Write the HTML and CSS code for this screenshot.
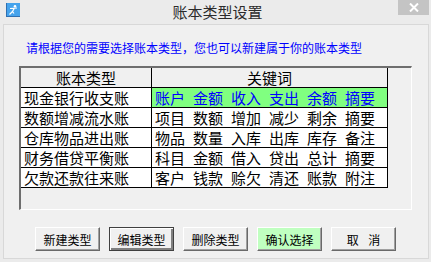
FILE: index.html
```html
<!DOCTYPE html>
<html lang="zh">
<head>
    <meta charset="UTF-8">
    <title>账本类型设置</title>
    <link rel="stylesheet" href="styles.css">
</head>
<body>

<div class="window">
    <!-- 标题栏 -->
    <div class="titlebar">
        <svg class="app-icon" width="14" height="14" viewBox="0 0 14 14">
            <rect x="0" y="0" width="14" height="14" fill="#2f6fb0"/>
            <rect x="1" y="0" width="13" height="13" fill="#45a3ec"/>
            <circle cx="9" cy="3.2" r="1.3" fill="#fff"/>
            <path d="M4 5.5 L11 5 M8.5 5 L6.5 8.5 L8 10.5 M6.5 8.5 L3.5 11.5" stroke="#fff" stroke-width="1.2" fill="none"/>
        </svg>
        <div class="title">账本类型设置</div>
        <div class="close">
            <svg width="10" height="9" viewBox="0 0 10 9">
                <path d="M1 0.5 L9 8.5 M9 0.5 L1 8.5" stroke="#fff" stroke-width="2"/>
            </svg>
        </div>
    </div>

    <div class="client">
        <div class="tip">请根据您的需要选择账本类型，您也可以新建属于你的账本类型</div>

        <div class="panel">
            <div class="grid">
                <div class="row head">
                    <div class="c1 center">账本类型</div>
                    <div class="c2 center">关键词</div>
                </div>
                <div class="row selected">
                    <div class="c1">现金银行收支账</div>
                    <div class="c2"><span>账户</span><span>金额</span><span>收入</span><span>支出</span><span>余额</span><span>摘要</span></div>
                </div>
                <div class="row">
                    <div class="c1">数额增减流水账</div>
                    <div class="c2"><span>项目</span><span>数额</span><span>增加</span><span>减少</span><span>剩余</span><span>摘要</span></div>
                </div>
                <div class="row">
                    <div class="c1">仓库物品进出账</div>
                    <div class="c2"><span>物品</span><span>数量</span><span>入库</span><span>出库</span><span>库存</span><span>备注</span></div>
                </div>
                <div class="row">
                    <div class="c1">财务借贷平衡账</div>
                    <div class="c2"><span>科目</span><span>金额</span><span>借入</span><span>贷出</span><span>总计</span><span>摘要</span></div>
                </div>
                <div class="row">
                    <div class="c1">欠款还款往来账</div>
                    <div class="c2"><span>客户</span><span>钱款</span><span>赊欠</span><span>清还</span><span>账款</span><span>附注</span></div>
                </div>
            </div>
        </div>

        <div class="buttons">
            <button>新建类型</button>
            <button class="default">编辑类型</button>
            <button>删除类型</button>
            <button class="ok">确认选择</button>
            <button class="wide">取 消</button>
        </div>
    </div>
</div>

</body>
</html>
```

FILE: styles.css
```css
body {
    margin: 0;
    padding: 0;
    background-color: #ebebeb;
    font-family: "Noto Sans CJK SC", "DejaVu Sans", sans-serif;
}
.window {
    width: 431px;
    height: 262px;
    overflow: hidden;
}
.titlebar {
    position: relative;
    height: 24px;
    display: flex;
    align-items: center;
}
.app-icon {
    position: absolute;
    left: 6px;
    top: 3px;
}
.title {
    flex: 1;
    text-align: center;
    font-size: 15px;
    line-height: 24px;
    color: #2b2b2b;
    padding-left: 4px;
}
.close {
    position: absolute;
    right: 2px;
    top: 0;
    width: 31px;
    height: 15px;
    background-color: #c4c4c4;
    display: flex;
    align-items: center;
    justify-content: center;
}
.client {
    margin-left: 3px;
    width: 424px;
    height: 233px;
    border: 1px solid #d8d8d8;
    background-color: #f0f0f0;
    display: flex;
    flex-direction: column;
}
.tip {
    margin: 15px 0 0 22px;
    font-size: 12px;
    line-height: 16px;
    color: #0000ff;
    white-space: nowrap;
}
.panel {
    margin: 10px 0 0 15px;
    width: 390px;
    height: 141px;
    border-top: 2px solid #6e6e6e;
    border-left: 2px solid #6e6e6e;
    border-right: 1px solid #ffffff;
    border-bottom: 1px solid #ffffff;
    background-color: #f0f0f0;
}
.grid {
    width: 367px;
}
.row {
    display: flex;
    height: 20px;
    box-sizing: border-box;
    border-bottom: 1px solid #000;
    background-color: #fff;
    font-size: 15px;
    line-height: 19px;
    color: #000;
}
.row.head {
    background-color: #f0f0f0;
}
.row.selected .c2 {
    background-color: #80ff80;
    color: #0000ff;
}
.c1 {
    width: 131px;
    box-sizing: border-box;
    border-right: 1px solid #000;
    padding-left: 3px;
    white-space: nowrap;
}
.c2 {
    width: 236px;
    box-sizing: border-box;
    border-right: 1px solid #000;
    padding-left: 3px;
    display: flex;
    gap: 8px;
    white-space: nowrap;
}
.center {
    justify-content: center;
    text-align: center;
    padding-left: 0;
}
.buttons {
    margin: 17px 0 0 31px;
    display: flex;
    gap: 9px;
}
button {
    width: 65px;
    height: 24px;
    padding: 0;
    font-family: "Noto Sans CJK SC", "DejaVu Sans", sans-serif;
    font-size: 12px;
    color: #000;
    background-color: #f0f0f0;
    border: 1px solid;
    border-color: #ffffff #696969 #696969 #ffffff;
    box-shadow: inset -1px -1px 0 #a0a0a0;
}
button.default {
    border: 1px solid #404040;
    box-shadow: inset 1px 1px 0 #ffffff, inset -2px -2px 0 #808080;
}
button.ok {
    background-color: #c0ffc0;
}
button.wide {
    word-spacing: 7px;
}
```
